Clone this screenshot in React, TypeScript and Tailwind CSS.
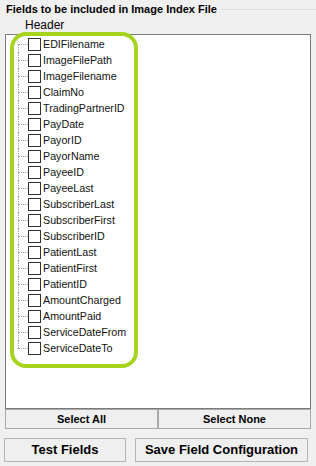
import React from "react";

const fields = [
  "EDIFilename",
  "ImageFilePath",
  "ImageFilename",
  "ClaimNo",
  "TradingPartnerID",
  "PayDate",
  "PayorID",
  "PayorName",
  "PayeeID",
  "PayeeLast",
  "SubscriberLast",
  "SubscriberFirst",
  "SubscriberID",
  "PatientLast",
  "PatientFirst",
  "PatientID",
  "AmountCharged",
  "AmountPaid",
  "ServiceDateFrom",
  "ServiceDateTo",
];

const TreeRow = ({ label, first, last }: { label: string; first: boolean; last: boolean }) => {
  return (
    <div className="flex h-[16px] items-stretch">
      {/* tree lines */}
      <div className="ml-[12px] flex w-[10px] flex-col">
        <div className={"h-[8px] " + (first ? "" : "border-l border-dotted border-[#a0a0a0]")} />
        <div
          className={
            "h-[8px] border-t border-dotted border-[#a0a0a0] " +
            (last ? "" : "border-l")
          }
        />
      </div>
      <div className="flex items-center">
        <span className="h-[13px] w-[13px] border border-[#333333] bg-white" />
        <span className="ml-[2px] text-[10.7px] leading-none text-[#111111]">{label}</span>
      </div>
    </div>
  );
};

export default function App() {
  return (
    <div
      className="relative h-[466px] w-[316px] overflow-hidden bg-[#f0f0f0]"
      style={{ fontFamily: '"Liberation Sans", Arial, sans-serif' }}
    >
      {/* group title */}
      <div className="flex items-center pl-[6px] pt-[2px]">
        <span className="text-[11px] font-bold leading-[14px] text-black">
          Fields to be included in Image Index File
        </span>
        <div className="ml-[5px] h-px flex-1 bg-[#dcdcdc]" />
      </div>

      <div className="pl-[25px] pt-[2px] text-[12px] leading-[14px] text-black">Header</div>

      {/* tree box */}
      <div className="mx-[5px] mt-[2px] h-[375px] border border-[#7a7a7a] bg-white pt-[1px]">
        {fields.map((f, i) => (
          <TreeRow key={f} label={f} first={i === 0} last={i === fields.length - 1} />
        ))}
      </div>

      <div className="mx-[5px] flex h-[20px]">
        <button className="flex-1 border border-[#a8a8a8] bg-[#efefef] text-[11px] font-bold text-black">
          Select All
        </button>
        <button className="flex-1 border border-[#a8a8a8] bg-[#efefef] text-[11px] font-bold text-black">
          Select None
        </button>
      </div>

      <div className="mt-[9px] flex h-[24px] pl-[4px]">
        <button className="w-[122px] border border-[#b4b4b4] bg-[#efefef] text-[13px] font-bold text-black">
          Test Fields
        </button>
        <button className="ml-[9px] w-[173px] border border-[#b4b4b4] bg-[#efefef] text-[13px] font-bold text-black">
          Save Field Configuration
        </button>
      </div>

      {/* green highlight annotation */}
      <div className="pointer-events-none absolute left-[10px] top-[32px] h-[336px] w-[128px] rounded-[16px] border-[4px] border-[#a6d41e]" />
    </div>
  );
}
